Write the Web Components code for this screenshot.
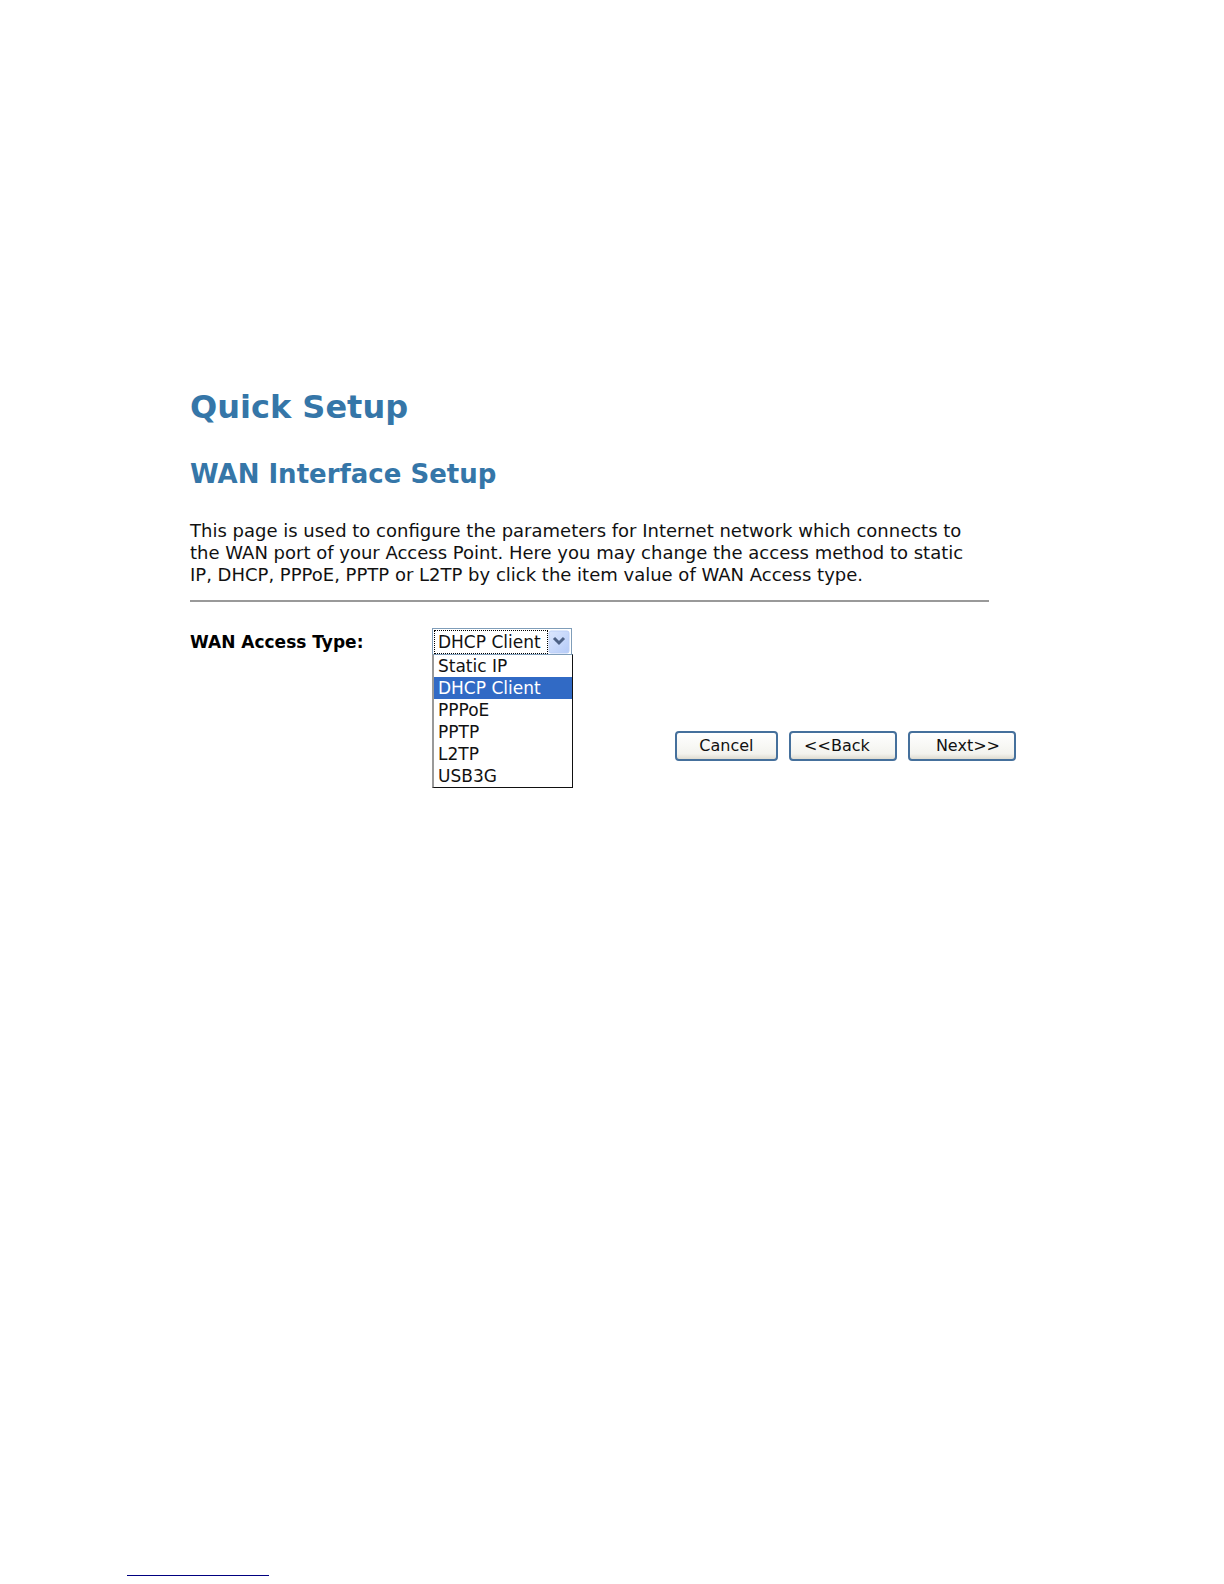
<!DOCTYPE html>
<html lang="en">
<head>
<meta charset="utf-8">
<title>Quick Setup</title>
<style>
  body {
    margin: 0;
    background: #fff;
    color: #111;
    font: 18px/22px "DejaVu Sans", sans-serif;
  }
</style>
</head>
<body>
<setup-page>
  <setup-intro>
    <span slot="title">Quick Setup</span>
    <span slot="subtitle">WAN Interface Setup</span>
    This page is used to configure the parameters for Internet network which connects to<br>
    the WAN port of your Access Point. Here you may change the access method to static<br>
    IP, DHCP, PPPoE, PPTP or L2TP by click the item value of WAN Access type.
  </setup-intro>
  <access-type label="WAN Access Type:" value="DHCP Client"
    options="Static IP,DHCP Client,PPPoE,PPTP,L2TP,USB3G"></access-type>
  <wizard-buttons slot="actions"></wizard-buttons>
</setup-page>

<script>
class SetupPage extends HTMLElement {
  constructor() {
    super();
    this.attachShadow({ mode: 'open' });
  }

  connectedCallback() {
    this.shadowRoot.innerHTML = `
      <style>
        :host {
          display: flex;
          flex-direction: column;
          box-sizing: border-box;
          min-height: 100vh;
          padding: 388px 17% 8px 190px;
        }
        main {
          flex: 1;
        }
        .note-line {
          width: 142px;
          margin: 0 0 0 -63px;
          border: 0;
          border-top: 1px solid #000080;
        }
      </style>
      <main>
        <slot></slot>
        <slot name="actions"></slot>
      </main>
      <hr class="note-line">
    `;
  }
}
customElements.define('setup-page', SetupPage);

class SetupIntro extends HTMLElement {
  constructor() {
    super();
    this.attachShadow({ mode: 'open' });
  }

  connectedCallback() {
    this.shadowRoot.innerHTML = `
      <style>
        :host {
          display: block;
          margin-right: 27px;
        }
        h1, h2 {
          margin: 0;
          color: #3576a8;
          font-weight: bold;
        }
        h1 {
          font-size: 32px;
          line-height: 38px;
        }
        h2 {
          margin-top: 32px;
          font-size: 26px;
          line-height: 32px;
        }
        p {
          margin: 30px 0 14px;
          font-size: 18px;
          line-height: 22px;
          white-space: nowrap;
        }
        hr {
          margin: 0;
          border: 0;
          border-top: 2px solid #999;
        }
      </style>
      <h1><slot name="title"></slot></h1>
      <h2><slot name="subtitle"></slot></h2>
      <p><slot></slot></p>
      <hr>
    `;
  }
}
customElements.define('setup-intro', SetupIntro);

class AccessType extends HTMLElement {
  constructor() {
    super();
    this.attachShadow({ mode: 'open' });
  }

  connectedCallback() {
    this.render();
    this.addEventListeners();
  }

  render() {
    const value = this.getAttribute('value');
    const options = this.getAttribute('options').split(',');
    this.shadowRoot.innerHTML = `
      <style>
        :host {
          display: flex;
          align-items: center;
          margin-top: 26px;
        }
        label {
          width: 242px;
          color: #000;
          font-size: 17px;
          font-weight: bold;
        }
        .combo {
          position: relative;
          width: 140px;
        }
        select {
          display: block;
          box-sizing: border-box;
          width: 140px;
          height: 28px;
          margin: 0;
          padding: 0 0 0 5px;
          appearance: none;
          border: 1px solid #7f9db9;
          border-radius: 0;
          outline: 0;
          background: #fff;
          color: #111;
          font: 17px/24px "DejaVu Sans", sans-serif;
        }
        .focus {
          position: absolute;
          top: 2px;
          left: 2px;
          width: 112px;
          height: 22px;
          border: 1px dotted #000;
          pointer-events: none;
        }
        svg {
          position: absolute;
          top: 2px;
          right: 2px;
          pointer-events: none;
        }
        ul {
          position: absolute;
          top: 26px;
          left: 0;
          box-sizing: border-box;
          width: 141px;
          margin: 0;
          padding: 0;
          border: 1px solid #111;
          border-top-color: #7f9db9;
          border-left: 2px solid #999;
          background: #fff;
          list-style: none;
        }
        li {
          padding-left: 4px;
          font-size: 17px;
          line-height: 22px;
          white-space: nowrap;
          cursor: default;
        }
        li.selected {
          background: #316ac5;
          color: #fff;
        }
      </style>
      <label for="type">${this.getAttribute('label')}</label>
      <div class="combo">
        <select id="type">
          ${options.map((o) => `<option${o === value ? ' selected' : ''}>${o}</option>`).join('')}
        </select>
        <span class="focus"></span>
        <svg width="22" height="24" viewBox="0 0 22 24" aria-hidden="true">
          <defs>
            <linearGradient id="face" x1="0" y1="0" x2="1" y2="1">
              <stop offset="0" stop-color="#dce7fe"/>
              <stop offset="1" stop-color="#b5cbf8"/>
            </linearGradient>
          </defs>
          <rect x="1" y="1" width="20" height="22" rx="2" fill="url(#face)" stroke="#bdd0f7"/>
          <path d="M6 8l5 5 5-5" fill="none" stroke="#4d6185" stroke-width="3"/>
        </svg>
        <ul role="listbox">
          ${options.map((o) => `<li role="option" class="${o === value ? 'selected' : ''}">${o}</li>`).join('')}
        </ul>
      </div>
    `;
  }

  addEventListeners() {
    const select = this.shadowRoot.querySelector('select');
    const items = this.shadowRoot.querySelectorAll('li');
    items.forEach((item, index) => {
      item.addEventListener('click', () => {
        items.forEach((i) => i.classList.remove('selected'));
        item.classList.add('selected');
        select.selectedIndex = index;
      });
    });
  }
}
customElements.define('access-type', AccessType);

class WizardButtons extends HTMLElement {
  constructor() {
    super();
    this.attachShadow({ mode: 'open' });
  }

  connectedCallback() {
    this.shadowRoot.innerHTML = `
      <style>
        :host {
          display: flex;
          justify-content: flex-end;
          gap: 11px;
          margin-top: 75px;
        }
        button {
          box-sizing: border-box;
          width: 108px;
          height: 30px;
          padding: 0;
          border: 2px solid #45709c;
          border-radius: 4px;
          background: linear-gradient(#fff, #f3f3ee 80%, #dedbd0);
          color: #111;
          font: 16px/22px "DejaVu Sans", sans-serif;
        }
        .cancel {
          width: 103px;
        }
        .back {
          padding-right: 12px;
        }
        .next {
          padding-left: 12px;
        }
      </style>
      <button type="button" class="cancel">Cancel</button>
      <button type="button" class="back">&lt;&lt;Back</button>
      <button type="button" class="next">Next&gt;&gt;</button>
    `;
  }
}
customElements.define('wizard-buttons', WizardButtons);
</script>
</body>
</html>
